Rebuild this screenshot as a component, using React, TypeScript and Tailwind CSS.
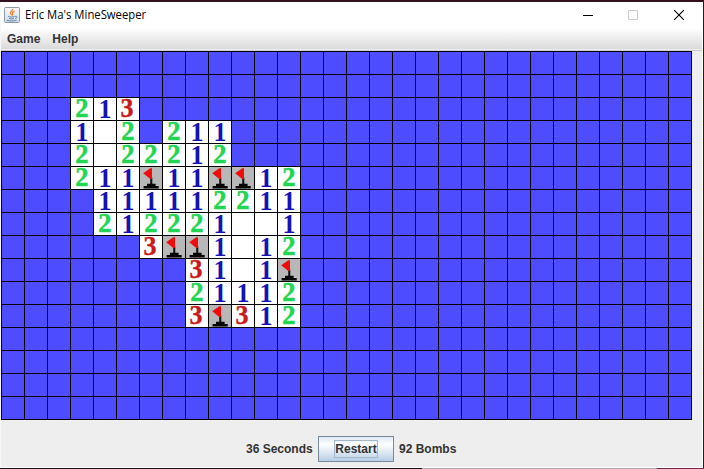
import React from "react";

const COLUMNS = 30;

// "." covered, "_" opened and empty, "F" flagged, digits are mine counts
const OPENED: string[] = [
  "",
  "",
  "...213",
  "...1_2.211",
  "...2_22212",
  "...211F11FF12",
  "....111112211",
  "....212221__1",
  "......3FF1_12",
  "........31_1F",
  "........21112",
  "........3F312",
  "",
  "",
  "",
  "",
];

const digitStyle: Record<string, string> = {
  "1": "text-[#1414b4] translate-y-[0.5px] scale-y-[1.05]",
  "2": "text-[#22d552] -translate-x-[0.5px] scale-x-[1.02] scale-y-[1.06] [-webkit-text-stroke:0.5px_#22d552]",
  "3": "text-[#c91a1a] -translate-x-px scale-y-[1.05] [-webkit-text-stroke:0.4px_#c91a1a]",
};

function Flag() {
  return (
    <svg viewBox="0 0 22 22" className="block h-[22px] w-[22px]">
      <path d="M10.2 10.5h2.1v8h-2.1z" fill="#111" />
      <path d="M3.2 6.3 10.3 1.3H12v10.6h-1.7z" fill="#f00c0c" />
      <path d="M7 16.8h8.6v2.1h3.1v2.6H3.6v-2.6H7z" fill="#050505" />
    </svg>
  );
}

function Cell({ value }: { value: string }) {
  const bg = value === "." ? "bg-[#4d4dff]" : value === "F" ? "bg-[#b8b8b8]" : "bg-white";
  return (
    <div className={`flex h-[22px] w-[22px] items-center justify-center ${bg}`}>
      {value === "F" && <Flag />}
      {digitStyle[value] && (
        <span className={`block text-[26px] leading-[22px] font-bold ${digitStyle[value]}`}>{value}</span>
      )}
    </div>
  );
}

function JavaIcon() {
  return (
    <svg viewBox="0 0 16 16" className="h-4 w-4">
      <defs>
        <linearGradient id="tile" x1="0" y1="0" x2="0" y2="1">
          <stop offset="0" stopColor="#fafbfc" />
          <stop offset="1" stopColor="#cbd9e6" />
        </linearGradient>
      </defs>
      <rect x=".5" y=".5" width="15" height="15" rx="1" fill="url(#tile)" stroke="#8b9ba9" />
      <path d="M8.8 1.8c.8 1.8-3.2 2.7-2.2 4.5.3.8 1 1.2.8 2M10.6 4.4C8.5 5 8 5.8 8.6 6.7c.4.7.2 1.1-.3 1.6" fill="none" stroke="#ee8130" strokeWidth="1.2" />
      <path d="M4.2 9.5c1.8.6 4.6.6 6.4 0M5 11.4c1.6.5 3.6.5 5 0M3 13.3c2.6.8 7 .8 9.6-.2M11.2 9.4c2.4-.6 2.2 1.6 0 2.1" fill="none" stroke="#56799c" strokeWidth=".9" />
    </svg>
  );
}

export default function App() {
  return (
    <div className="h-[469px] w-[704px] overflow-hidden bg-[#35101f] pt-[2px] font-['Liberation_Sans',Arial,sans-serif]">
      <div className="flex h-[466px] w-[703px] flex-col border-r border-b border-l border-r-white border-b-white border-l-[#f8f8f8] bg-[#eee]">
        <header className="flex h-[26px] shrink-0 items-center bg-white pl-[3px]">
          <JavaIcon />
          <h1 className="ml-[5px] origin-left scale-x-[0.942] whitespace-nowrap font-['Open_Sans','Noto_Sans',sans-serif] text-[12px] leading-4 text-black">
            Eric Ma's MineSweeper
          </h1>
          <div className="mr-[18px] ml-auto flex items-center gap-[35px]">
            <svg viewBox="0 0 10 10" className="h-[10px] w-[10px]" shapeRendering="crispEdges">
              <path d="M0 5h10v1H0z" />
            </svg>
            <svg viewBox="0 0 10 10" className="mr-px h-[10px] w-[10px]">
              <path d="M.5.5h9v9h-9z" fill="none" stroke="#ccc" />
            </svg>
            <svg viewBox="0 0 10 10" className="h-[10px] w-[10px]">
              <path d="M0 0l10 10M10 0L0 10" stroke="#000" strokeWidth="1.1" />
            </svg>
          </div>
        </header>
        <nav className="flex h-[23px] shrink-0 items-center border-b border-[#ccc] bg-[#eee] pb-px text-[12px] font-bold text-[#333]">
          <div className="flex h-[21px] w-full items-center gap-[12px] bg-linear-to-b from-white to-[#dadada] pt-px pl-[6px]">
            <span className="leading-4">Game</span>
            <span className="leading-4">Help</span>
          </div>
        </nav>
        <main className="grid w-[691px] shrink-0 grid-cols-[repeat(30,22px)] gap-px border border-black bg-black font-['Liberation_Serif','Times_New_Roman',serif]">
          {OPENED.map((row, r) =>
            Array.from({ length: COLUMNS }, (_, c) => <Cell key={`${r}-${c}`} value={row[c] ?? "."} />),
          )}
        </main>
        <footer className="flex items-center pt-[16px] pl-[245px] text-[12px] font-bold text-[#333]">
          <span className="w-[67px] whitespace-nowrap">36 Seconds</span>
          <button className="ml-[5px] flex h-[26px] w-[76px] items-center justify-center border border-[#7a8a99] bg-linear-to-b from-[#dde8f3] via-white via-30% to-[#b8cfe5]">
            <span className="flex h-[18px] w-[44px] items-center justify-center border border-[#a3b8cc]">Restart</span>
          </button>
          <span className="ml-[5px] whitespace-nowrap">92 Bombs</span>
        </footer>
      </div>
      <div className="flex h-px">
        <div className="w-[422px] bg-[#151515]" />
        <div className="w-[235px] bg-[#aaa]" />
        <div className="w-[47px] bg-[#702b48]" />
      </div>
    </div>
  );
}
